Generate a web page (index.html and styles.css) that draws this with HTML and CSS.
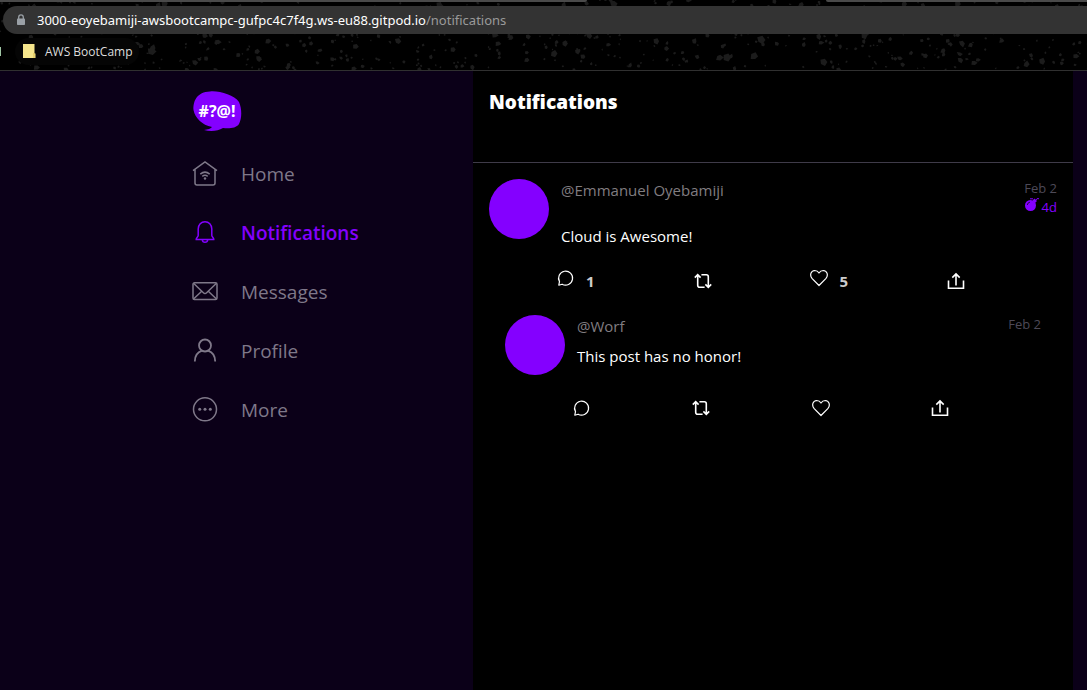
FILE: index.html
```html
<!DOCTYPE html>
<html lang="en">
<head>
<meta charset="utf-8">
<meta name="viewport" content="width=device-width, initial-scale=1">
<title>Notifications</title>
<link rel="stylesheet" href="styles.css">
</head>
<body>
<svg class="sprite" aria-hidden="true">
  <symbol id="comment" viewBox="0 0 18 18"><path d="M1.800 16.200 L2.500 12.600 A7 7 0 1 1 5.100 15.200 Z" fill="none" stroke="currentColor" stroke-width="1.2" stroke-linejoin="round"/></symbol>
  <symbol id="repost" viewBox="0 0 18 18"><path d="M0.8 5.6 L3.7 2.6 L6.6 5.6 M3.7 3 V13.2 Q3.7 15.2 5.7 15.2 H10.6 M7.4 2.8 H12.3 Q14.3 2.8 14.3 4.8 V15 M11.4 12.4 L14.3 15.4 L17.2 12.4" fill="none" stroke="currentColor" stroke-width="1.6"/></symbol>
  <symbol id="heart" viewBox="0 0 18 18"><path d="M9 16.500 L2.200 9.700 C-0.600 6.500 0.700 1.600 4.700 1.500 Q7.500 1.500 9 4 Q10.500 1.500 13.300 1.500 C17.300 1.600 18.600 6.500 15.800 9.700 Z" fill="none" stroke="currentColor" stroke-width="1.2" stroke-linejoin="round"/></symbol>
  <symbol id="share" viewBox="0 0 18 18"><path d="M1.500 8.500 V16.200 H16.500 V8.500 M9 13.500 V2 M5.300 5.600 L9 1.900 L12.700 5.600" fill="none" stroke="currentColor" stroke-width="1.600"/></symbol>
</svg>

<header class="browser">
  <svg class="speckles" id="speckles" aria-hidden="true"></svg>
  <div class="tab-edges"><span class="edge edge-left"></span><span class="edge edge-right"></span></div>
  <div class="address" role="textbox" aria-label="Address">
    <svg class="lock" viewBox="0 0 10 12"><path d="M2.700 5 V3.200 A2.300 2.300 0 0 1 7.300 3.200 V5" fill="none" stroke="#9aa0a6" stroke-width="1.300"/><rect x="1" y="4.500" width="8" height="6.500" rx="0.800" fill="#9aa0a6"/></svg>
    <span class="host">3000-eoyebamiji-awsbootcampc-gufpc4c7f4g.ws-eu88.gitpod.io<span class="path">/notifications</span></span>
  </div>
  <nav class="bookmarks" aria-label="Bookmarks">
    <span class="sliver"></span>
    <a class="bookmark" href="#">
      <svg class="folder" viewBox="0 0 13 15"><path d="M0 0 H11.500 V9.500 H12.500 V14 H0 Z" fill="#f5e58b"/><path d="M11 9 V14" stroke="#d9bd4d" stroke-width="1"/></svg>
      <span>AWS BootCamp</span>
    </a>
  </nav>
</header>

<div class="app">
  <aside class="sidebar">
    <svg class="logo" viewBox="0 0 50 42" role="img" aria-label="Logo">
      <path d="M18 1.500 C27 0.500 42 5 47 12 C50 19 50 28 47 34 C44 38.500 37 38.500 31 38 C26 41 19 42 12 40 C16 39.500 19 38.500 20 37 C10 35 3 28 1.500 20 C1 11 5 2 18 1.500 Z" fill="#8400ff"/>
      <text class="logo-text" x="25" y="27" text-anchor="middle">#?@!</text>
    </svg>
    <nav class="menu">
      <a href="#"><svg viewBox="0 0 26 26"><path d="M1 9.700 L13 1 L25 9.700 M3 8.500 V22 Q3 24 5 24 H21 Q23 24 23 22 V8.500 M8.300 13.100 Q13 9.100 17.700 13.100 M10.300 15.300 Q13 13.100 15.700 15.300"/><circle class="dot" cx="13" cy="17.500" r="1.200"/></svg>Home</a>
      <a class="active" href="#" aria-current="page"><svg viewBox="0 0 26 26"><path d="M6.200 15.500 V9 C6.200 4.500 9.200 1.700 13 1.700 C16.800 1.700 19.800 4.500 19.800 9 V15.500 C19.900 16.900 22 17.700 21.800 19.500 H4.200 C4 17.700 6.100 16.900 6.200 15.500 Z M10.300 19.700 C10.600 23.100 15.400 23.100 15.700 19.700"/></svg>Notifications</a>
      <a href="#"><svg viewBox="0 0 26 26"><rect x="1" y="3.800" width="24" height="16.800" rx="1.500"/><path d="M1.500 4.300 L11.400 13.700 Q13 15.200 14.600 13.700 L24.500 4.300 M1.500 20 L9.700 12.200 M24.500 20 L16.300 12.200"/></svg>Messages</a>
      <a href="#"><svg class="bold" viewBox="0 0 26 26"><circle cx="13" cy="7.500" r="6"/><path d="M2.800 23.500 C2.800 17 6.600 13.900 10 12.700 M23.200 23.500 C23.200 17 19.400 13.900 16 12.700"/></svg>Profile</a>
      <a href="#"><svg viewBox="0 0 26 26"><circle cx="13" cy="12.300" r="11.500"/><circle class="dot" cx="7.700" cy="12.300" r="1.500"/><circle class="dot" cx="13" cy="12.300" r="1.500"/><circle class="dot" cx="18.300" cy="12.300" r="1.500"/></svg>More</a>
    </nav>
  </aside>

  <main class="feed">
    <div class="feed-header"><h1>Notifications</h1></div>
    <article class="activity">
      <div class="row">
        <div class="avatar"></div>
        <div class="body">
          <div class="head">
            <a class="handle" href="#">@Emmanuel Oyebamiji</a>
            <div class="meta">
              <time>Feb 2</time>
              <span class="expires"><svg viewBox="0 0 16 14"><circle cx="6.500" cy="7.500" r="5.500"/><path d="M8.500 2.500 L10.500 0.500 L13 3 L11 5 Z"/><path d="M6 0.800 H9 M11.500 2.500 L13 0.700 H15" fill="none" stroke="#8400ff" stroke-width="1"/><path d="M3.300 7 Q3.500 4.500 6 4.100" fill="none" stroke="#000" stroke-width="0.700"/></svg>4d</span>
            </div>
          </div>
          <p>Cloud is Awesome!</p>
        </div>
      </div>
      <div class="actions">
        <button aria-label="Reply"><svg class="icon"><use href="#comment"/></svg><span>1</span></button>
        <button aria-label="Repost"><svg class="icon"><use href="#repost"/></svg></button>
        <button aria-label="Like"><svg class="icon"><use href="#heart"/></svg><span>5</span></button>
        <button aria-label="Share"><svg class="icon"><use href="#share"/></svg></button>
      </div>
      <div class="replies">
        <article class="activity">
          <div class="row">
            <div class="avatar"></div>
            <div class="body">
              <div class="head">
                <a class="handle" href="#">@Worf</a>
                <div class="meta"><time>Feb 2</time></div>
              </div>
              <p>This post has no honor!</p>
            </div>
          </div>
          <div class="actions">
            <button aria-label="Reply"><svg class="icon"><use href="#comment"/></svg></button>
            <button aria-label="Repost"><svg class="icon"><use href="#repost"/></svg></button>
            <button aria-label="Like"><svg class="icon"><use href="#heart"/></svg></button>
            <button aria-label="Share"><svg class="icon"><use href="#share"/></svg></button>
          </div>
        </article>
      </div>
    </article>
  </main>
</div>
<script src="speckles.js"></script>
</body>
</html>
```
FILE: styles.css
```css
* { box-sizing: border-box; }

body {
  margin: 0;
  min-height: 100vh;
  display: flex;
  flex-direction: column;
  background: #0b0018;
  color: #fff;
  font-family: "Open Sans", "Noto Sans", sans-serif;
  font-size: 15px;
}

a { color: inherit; text-decoration: none; }
.sprite { display: none; }

.browser {
  position: relative;
  background: #000;
  border-bottom: 1px solid #303030;
  padding-bottom: 5px;
}
.speckles {
  position: absolute;
  inset: 0;
  width: 100%;
  height: 100%;
  fill: #1c1c1c;
}
.tab-edges {
  position: relative;
  display: flex;
  justify-content: space-between;
  height: 6px;
}
.edge { height: 2px; background: #4a4a4a; }
.edge-left { width: 54%; border-radius: 0 0 4px 0; }
.edge-right { width: 24%; border-radius: 0 0 0 4px; }

.address {
  position: relative;
  display: flex;
  align-items: center;
  gap: 11px;
  height: 28px;
  margin-left: 3px;
  padding-left: 13px;
  background: #333;
  border-radius: 14px 0 0 14px;
  font-family: "Noto Sans", sans-serif;
  font-size: 13px;
  white-space: nowrap;
}
.lock { width: 10px; height: 12px; }
.path { color: #9a9a9a; }

.bookmarks {
  position: relative;
  display: flex;
  align-items: center;
  gap: 14px;
  padding-top: 4px;
}
.sliver { width: 1px; height: 9px; background: #9fc5a4; }
.bookmark {
  display: flex;
  align-items: center;
  gap: 9px;
  height: 27px;
  padding: 0 6px 0 8px;
  background: #050505;
  border-radius: 14px;
  color: #ddd;
  font-size: 12px;
}
.folder { width: 13px; height: 15px; }

.app { flex: 1; display: flex; }
.sidebar {
  flex: 0 0 473px;
  padding: 19px 0 0 192px;
}
.logo { display: block; width: 50px; height: 42px; }
.logo-text {
  fill: #fff;
  font: bold 16px "Noto Sans", sans-serif;
}
.menu { display: flex; flex-direction: column; padding-top: 12px; }
.menu a {
  display: flex;
  align-items: center;
  gap: 23px;
  height: 59px;
  color: #7f7889;
  font-size: 19px;
}
.menu svg {
  width: 26px;
  height: 26px;
  fill: none;
  stroke: currentColor;
  stroke-width: 1.5;
}
.menu svg.bold { stroke-width: 1.8; }
.menu .dot { fill: currentColor; stroke: none; }
.menu .active { color: #8400ff; font-weight: 600; }

.feed {
  flex: 1;
  min-width: 0;
  margin-right: 14px;
  background: #000;
}
.feed-header {
  height: 92px;
  padding: 16px;
  border-bottom: 1px solid #3f3b49;
}
h1 { margin: 0; font-size: 19px; line-height: 30px; font-weight: 800; }

.activity { padding: 16px 16px 0; }
.row { display: flex; gap: 12px; }
.avatar {
  flex: none;
  width: 60px;
  height: 60px;
  border-radius: 50%;
  background: #8400ff;
}
.body { flex: 1; }
.head { display: flex; justify-content: space-between; }
.handle { line-height: 22px; color: #807d80; }
.meta {
  display: flex;
  flex-direction: column;
  align-items: flex-end;
  font-size: 13px;
  line-height: 19px;
  color: #4d4957;
}
.expires { display: flex; gap: 2px; color: #8400ff; }
.expires svg { width: 16px; height: 14px; fill: #8400ff; }
p { margin: 7px 0 0; line-height: 24px; }

.actions {
  display: flex;
  justify-content: space-between;
  height: 24px;
  margin-top: 21px;
  padding: 0 92px 0 68px;
}
button {
  display: flex;
  align-items: center;
  gap: 11px;
  padding: 0;
  border: 0;
  background: none;
  color: #fff;
  font: inherit;
}
button span { line-height: 22px; font-weight: 700; color: #ccc; }
.icon { width: 18px; height: 18px; }
.icon:not(:last-child) { align-self: flex-start; }
.replies { padding-top: 6px; }
```
FILE: speckles.js
```js
// Scatters small angular flecks over the toolbar theme background.
const svg = document.getElementById("speckles");
let seed = 11;
const rand = () => (seed = (seed * 16807) % 2147483647) / 2147483647;
let d = "";
for (let i = 0; i < 1300; i++) {
  const x = rand() * 1920;
  const y = rand() * 70;
  const r = 1 + rand() * rand() * 3.5;
  for (let k = 0; k < 5; k++) {
    const a = (k / 5) * Math.PI * 2;
    const q = r * (0.5 + rand() * 0.7);
    d += (k ? "L" : "M") + (x + Math.cos(a) * q).toFixed(1) + " " + (y + Math.sin(a) * q).toFixed(1);
  }
  d += "Z";
}
const path = document.createElementNS("http://www.w3.org/2000/svg", "path");
path.setAttribute("d", d);
svg.appendChild(path);
```
